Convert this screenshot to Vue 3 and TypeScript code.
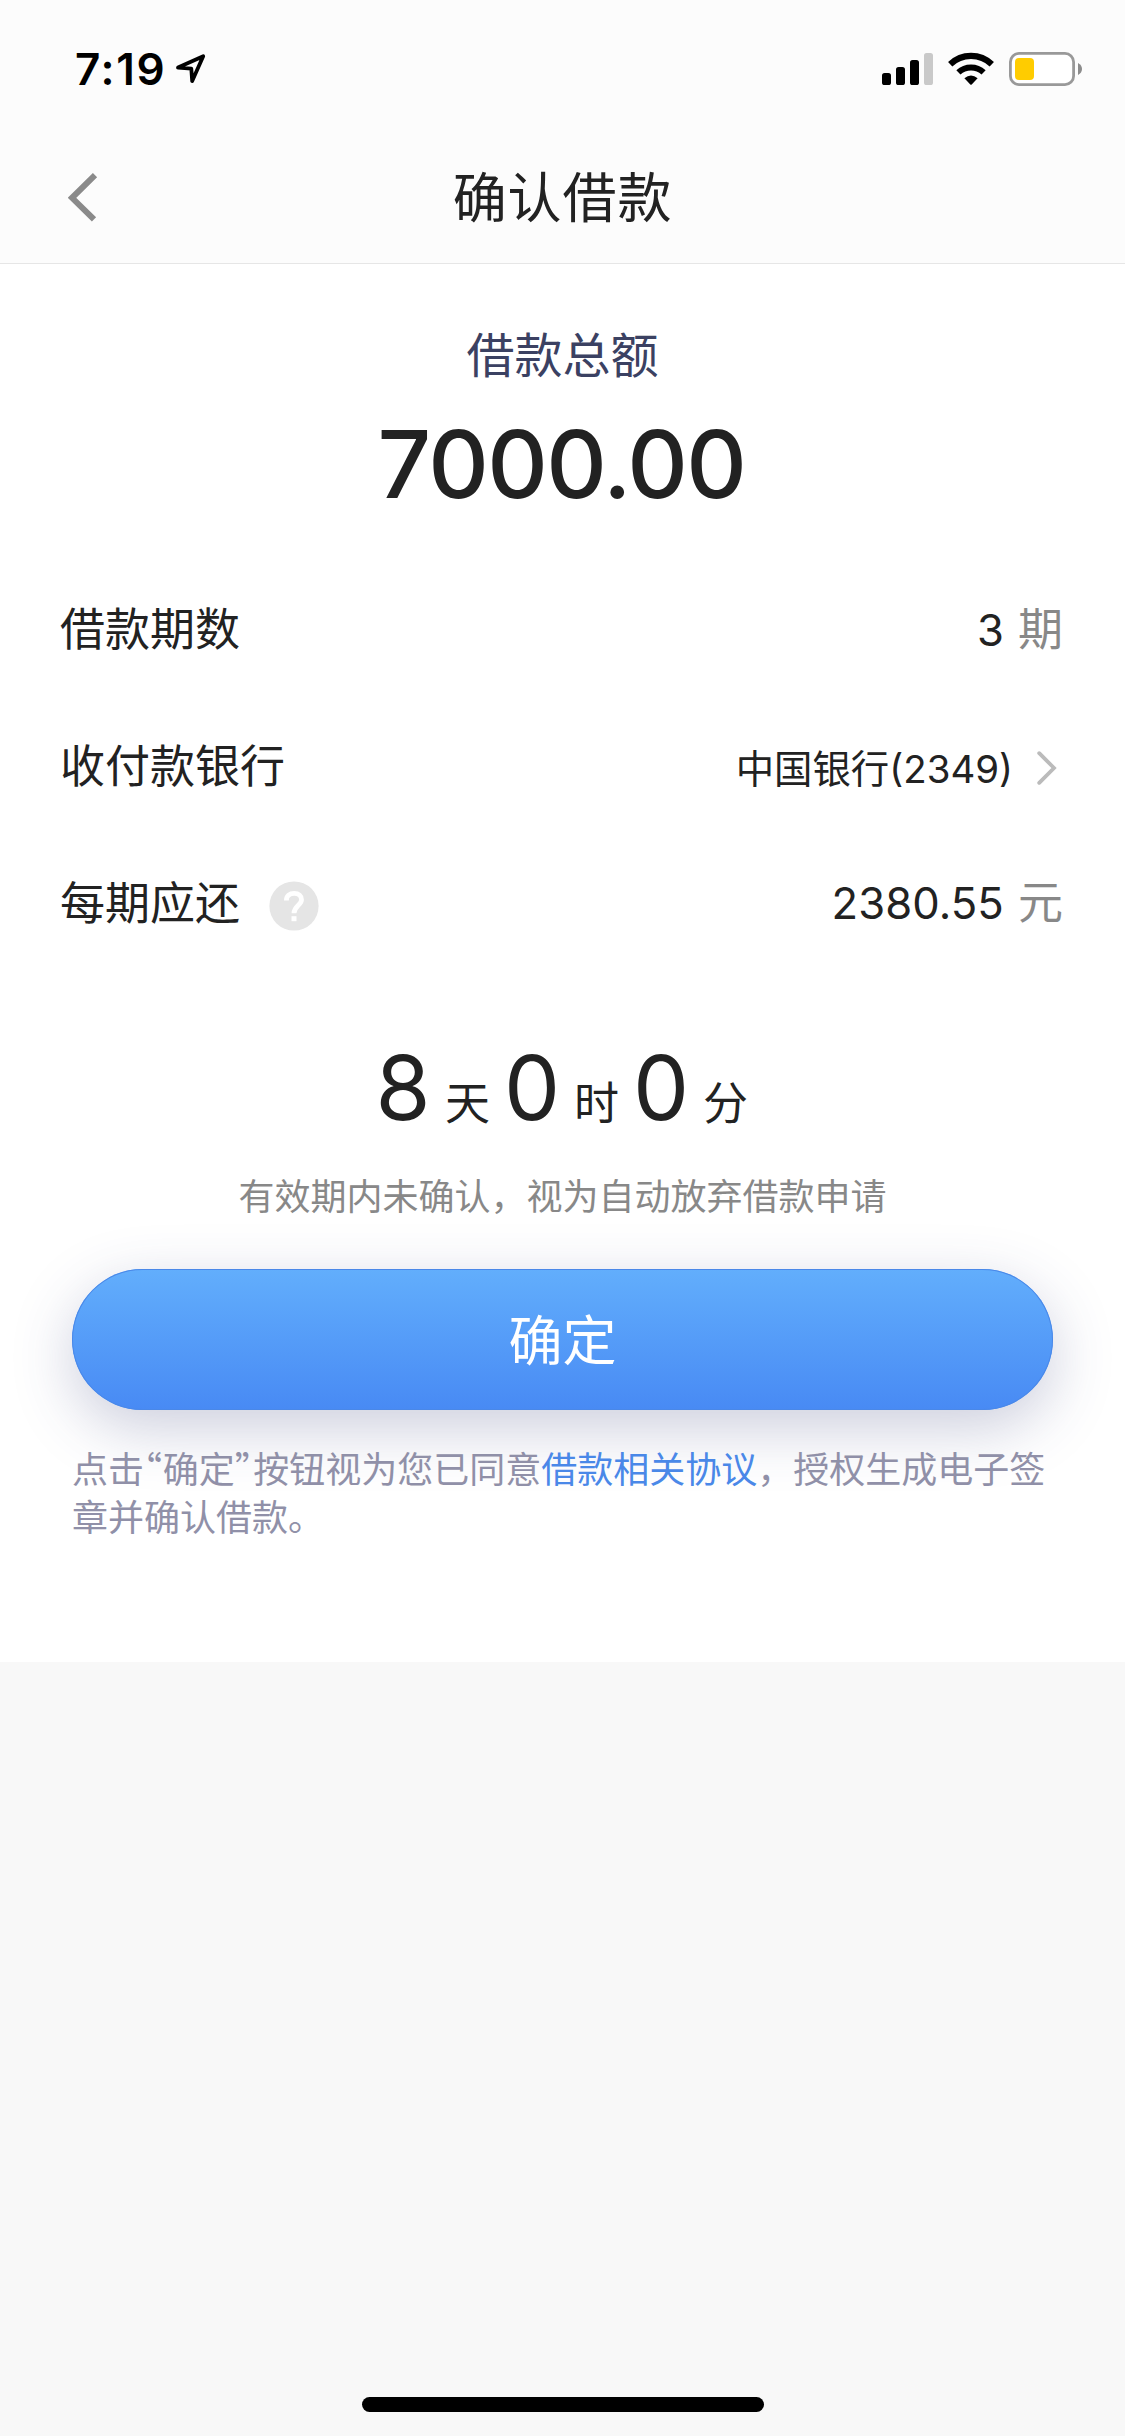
<script setup lang="ts">
import { ref } from 'vue'

interface CountdownPart {
  value: number
  unit: string
}

const total = ref('7000.00')
const periods = ref(3)
const bank = ref('中国银行(2349)')
const perPeriod = ref('2380.55')
const countdown = ref<CountdownPart[]>([
  { value: 8, unit: '天' },
  { value: 0, unit: '时' },
  { value: 0, unit: '分' },
])
</script>

<template>
  <div class="screen">
    <header class="header">
      <div class="status">
        <div class="status-left">
          <span class="time">7:19</span>
          <svg class="location" width="32" height="32" viewBox="0 0 32 32">
            <path d="M3 14.6 L28.2 3.2 L17.2 28 L16.3 15.6 Z" fill="none" stroke="#000" stroke-width="3.8" stroke-linejoin="round" />
          </svg>
        </div>
        <svg class="status-icons" width="202" height="36" viewBox="0 0 202 36">
          <rect x="0" y="21" width="9" height="12" rx="2.6" fill="#000" />
          <rect x="14" y="15" width="9" height="18" rx="2.6" fill="#000" />
          <rect x="28" y="8" width="9" height="25" rx="2.6" fill="#000" />
          <rect x="42" y="1" width="9" height="32" rx="2.6" fill="#c9c9c9" />
          <path d="M68.2 12.2 A30 30 0 0 1 109.8 12.2" fill="none" stroke="#000" stroke-width="6.2" />
          <path d="M76.4 20.4 A18.4 18.4 0 0 1 101.6 20.4" fill="none" stroke="#000" stroke-width="6" />
          <path d="M82.4 26.2 Q89 20.6 95.6 26.2 L89.7 32.4 Q89 33.1 88.3 32.4 Z" fill="#000" />
          <rect x="128.4" y="1.4" width="63.2" height="31.2" rx="8.6" fill="#fff" stroke="#999" stroke-width="2.8" />
          <rect x="133" y="6" width="19" height="22" rx="4" fill="#fc0" />
          <path d="M196 11 Q200 13.2 200 17 Q200 20.8 196 23 Z" fill="#8c8c8c" />
        </svg>
      </div>
      <div class="nav">
        <svg class="back" width="30" height="50" viewBox="0 0 30 50">
          <path d="M27 2.2 L4 24.8 L26 46.4" fill="none" stroke="#8a8a8a" stroke-width="6" />
        </svg>
        <h1 class="title">确认借款</h1>
      </div>
    </header>

    <main class="panel">
      <p class="total-label">借款总额</p>
      <p class="total">{{ total }}</p>

      <div class="rows">
        <div class="row">
          <span>借款期数</span>
          <span class="value">{{ periods }}<span class="unit">期</span></span>
        </div>
        <div class="row">
          <span>收付款银行</span>
          <span class="bank">
            <span>{{ bank }}</span>
            <svg width="20" height="36" viewBox="0 0 20 36">
              <path d="M2.2 2.2 L17 17 L2.2 31.8" fill="none" stroke="#bbb" stroke-width="3.8" stroke-linecap="round" stroke-linejoin="miter" />
            </svg>
          </span>
        </div>
        <div class="row">
          <span class="label-help">
            <span>每期应还</span>
            <svg class="help" width="50" height="50" viewBox="0 0 50 50">
              <circle cx="25" cy="25" r="24.6" fill="#e5e5e5" />
              <path d="M17.4 19.4 C17.4 14.6 20.7 12.4 25.2 12.4 C29.6 12.4 32.5 14.9 32.5 18.7 C32.5 24.2 25 25.2 25 32.2" fill="none" stroke="#fff" stroke-width="4.8" />
              <rect x="22.5" y="35.2" width="5" height="5" fill="#fff" />
            </svg>
          </span>
          <span class="value">{{ perPeriod }}<span class="unit">元</span></span>
        </div>
      </div>

      <div class="countdown">
        <div v-for="part in countdown" :key="part.unit" class="part">
          <span class="digit">{{ part.value }}</span>
          <span>{{ part.unit }}</span>
        </div>
      </div>
      <p class="hint">有效期内未确认，视为自动放弃借款申请</p>
      <button class="confirm" type="button">确定</button>
      <p class="agreement">
        点击<span class="quote">“</span>确定<span class="quote">”</span>按钮视为您已同意<a class="link">借款相关协议</a>，授权生成电子签章并确认借款。
      </p>
    </main>

    <footer class="home"><div class="home-bar"></div></footer>
  </div>
</template>

<style>
body {
  margin: 0;
  background: #f8f8f8;
}
</style>

<style scoped>
.screen {
  display: flex;
  flex-direction: column;
  width: 1125px;
  height: 2436px;
  overflow: hidden;
  background: #f8f8f8;
  color: #222;
  font-family: Inter, "Noto Sans CJK SC", sans-serif;
  font-size: 45px;
}
p,
h1 {
  margin: 0;
  font-weight: 400;
}
.header {
  box-sizing: border-box;
  height: 264px;
  background: #fcfcfc;
  border-bottom: 1px solid #e6e6e6;
}
.status {
  display: flex;
  justify-content: space-between;
  box-sizing: border-box;
  height: 132px;
  padding: 44px 43px 0 75px;
}
.status-left {
  display: flex;
  height: 50px;
}
.time {
  color: #000;
  font-size: 44px;
  font-weight: 600;
  line-height: 50px;
  letter-spacing: 1.7px;
}
.location {
  margin: 9px 0 0 9px;
}
.status-icons {
  margin-top: 8px;
  margin-right: -2px;
}
.nav {
  display: flex;
  align-items: center;
  height: 131px;
}
.back {
  margin-left: 68px;
}
.title {
  flex: 1;
  padding-top: 3px;
  padding-right: 98px;
  font-size: 54px;
  line-height: 76px;
  letter-spacing: 0.9px;
  text-align: center;
}
.panel {
  box-sizing: border-box;
  height: 1398px;
  padding-top: 56px;
  background: #fff;
}
.total-label {
  height: 72px;
  color: #3b4162;
  font-size: 48px;
  line-height: 72px;
  text-align: center;
}
.total {
  height: 120px;
  margin-top: 12px;
  padding-right: 2px;
  font-size: 94px;
  font-weight: 500;
  line-height: 120px;
  letter-spacing: -1.6px;
  text-align: center;
}
.rows {
  margin-top: 38px;
  padding: 0 62px 0 60px;
}
.row {
  display: flex;
  align-items: center;
  justify-content: space-between;
  height: 136.7px;
  line-height: 64px;
}
.value {
  font-size: 43.6px;
  letter-spacing: 0.1px;
}
.unit {
  margin-left: 14px;
  color: #888;
  font-size: 45px;
  letter-spacing: 0;
}
.bank {
  display: flex;
  align-items: center;
  gap: 24px;
  margin-right: 6px;
  padding-top: 3px;
  font-size: 38.4px;
}
.label-help {
  display: flex;
  align-items: center;
}
.help {
  margin: 5px 0 0 29px;
}
.countdown {
  display: flex;
  justify-content: center;
  gap: 13px;
  height: 110px;
  margin-top: 61px;
  padding-right: 3px;
}
.part {
  display: flex;
  align-items: baseline;
  gap: 13px;
  line-height: 110px;
}
.digit {
  width: 58px;
  font-size: 89px;
  text-align: center;
}
.hint {
  height: 54px;
  margin-top: 27px;
  color: #888;
  font-size: 36px;
  line-height: 54px;
  text-align: center;
}
.confirm {
  display: block;
  box-sizing: border-box;
  width: 981px;
  height: 141px;
  margin: 45px 72px 0;
  padding: 4px 0 0;
  border: 0;
  border-radius: 71px;
  background: linear-gradient(180deg, #62aefc 0%, #488af4 100%);
  box-shadow: 0 18px 60px rgba(59, 65, 125, 0.26), inset 0 0 0 1px #4a88e8;
  color: #fff;
  font-family: inherit;
  font-size: 54px;
  line-height: 137px;
  text-align: center;
}
.agreement {
  margin: 36px 72px 0;
  color: #9090a8;
  font-size: 36px;
  line-height: 48px;
}
.quote {
  font-family: "Noto Sans CJK SC", sans-serif;
  font-feature-settings: "halt";
  letter-spacing: 0.6px;
  line-height: 0;
}
.link {
  color: #4a88e8;
}
.home {
  display: flex;
  flex: 1;
  align-items: flex-end;
  justify-content: center;
  padding-bottom: 24px;
}
.home-bar {
  width: 402px;
  height: 15px;
  border-radius: 8px;
  background: #000;
}
</style>
